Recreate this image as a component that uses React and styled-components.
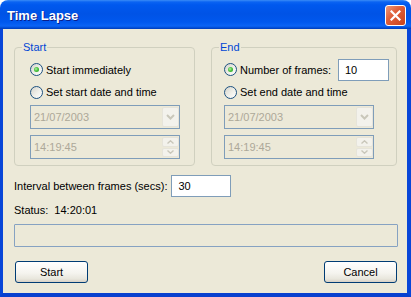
import React from "react";
import styled, { createGlobalStyle } from "styled-components";

const GlobalStyle = createGlobalStyle`
  html, body { margin: 0; padding: 0; background: #ffffff; }
  body { font-family: "Liberation Sans", Arial, sans-serif; font-size: 11px; color: #000; }
  * { box-sizing: border-box; }
`;

const Window = styled.div`
  width: 411px;
  height: 297px;
  display: flex;
  flex-direction: column;
`;

const TitleBar = styled.div`
  height: 29px;
  flex-shrink: 0;
  border-radius: 8px 8px 0 0;
  background: linear-gradient(
    to bottom,
    #3a8cf6 0px,
    #0a63f2 2px,
    #0058ee 5px,
    #0053e6 14px,
    #0058ee 22px,
    #0b64f5 26px,
    #0049d0 28px,
    #003cb8 29px
  );
  display: flex;
  align-items: center;
  justify-content: space-between;
  padding: 0 5px 0 7px;
`;

const Title = styled.span`
  color: #ffffff;
  font-family: "Liberation Sans", Arial, sans-serif;
  font-weight: bold;
  font-size: 13px;
  margin-top: 1px;
  text-shadow: 1px 1px 0 #0a1e8c;
`;

const CloseButton = styled.div`
  width: 21px;
  height: 21px;
  margin-top: 2px;
  border: 1px solid #ffffff;
  border-radius: 3px;
  background: linear-gradient(135deg, #eb9a7c 0%, #e0603b 40%, #c8421c 100%);
  display: flex;
  align-items: center;
  justify-content: center;
`;

const Body = styled.div`
  flex: 1;
  background: #ece9d8;
  border-left: 3px solid #0846d8;
  border-right: 4px solid #0846d8;
  border-bottom: 4px solid #0840cf;
  padding: 18px 9px 10px 11px;
  display: flex;
  flex-direction: column;
`;

const GroupsRow = styled.div`
  display: flex;
  gap: 16px;
  height: 119px;
`;

const GroupBox = styled.div`
  position: relative;
  width: ${(p) => p.$width}px;
  border: 1px solid #d0d0bf;
  border-radius: 4px;
  padding: 10px ${(p) => p.$right}px 6px ${(p) => p.$left}px;
  display: flex;
  flex-direction: column;
`;

const GroupLabel = styled.span`
  position: absolute;
  top: -8px;
  left: 7px;
  padding: 0 1px;
  line-height: 14px;
  background: #ece9d8;
  color: #0046d5;
`;

const RadioRow = styled.div`
  display: flex;
  align-items: center;
  gap: 3px;
  height: ${(p) => p.$h}px;
  flex-shrink: 0;
`;

const RadioCircle = styled.span`
  position: relative;
  width: 13px;
  height: 13px;
  flex-shrink: 0;
  border-radius: 50%;
  border: 1px solid #1c5180;
  background: linear-gradient(135deg, #d4d3cb 0%, #f0f0ea 55%, #ffffff 100%);
  &::after {
    content: "";
    display: ${(p) => (p.$checked ? "block" : "none")};
    position: absolute;
    left: 3px;
    top: 3px;
    width: 5px;
    height: 5px;
    border-radius: 50%;
    background: radial-gradient(circle at 40% 40%, #b6f0a8 0%, #4bc43f 45%, #1d9a1d 100%);
  }
`;

const TextField = styled.div`
  width: ${(p) => p.$width}px;
  height: 22px;
  flex-shrink: 0;
  margin-left: ${(p) => (p.$push ? "auto" : "0")};
  border: 1px solid #7f9db9;
  background: #ffffff;
  padding-left: 6px;
  display: flex;
  align-items: center;
`;

const Combo = styled.div`
  width: 150px;
  height: 24px;
  flex-shrink: 0;
  margin-top: ${(p) => p.$mt}px;
  border: 1px solid #7f9db9;
  background: #ece9d8;
  display: flex;
`;

const ComboText = styled.span`
  flex: 1;
  display: flex;
  align-items: center;
  padding-left: 3px;
  color: #aca899;
`;

const DropButton = styled.div`
  width: 17px;
  margin: 1px 0 1px 0;
  border-radius: 2px;
  background: #f3f2ec;
  border: 1px solid #e6e4da;
  display: flex;
  align-items: center;
  justify-content: center;
`;

const Spinner = styled.div`
  width: 17px;
  margin: 1px 0;
  display: flex;
  flex-direction: column;
  gap: 1px;
`;

const SpinHalf = styled.div`
  flex: 1;
  border-radius: 2px;
  background: #f3f2ec;
  border: 1px solid #e6e4da;
  display: flex;
  align-items: center;
  justify-content: center;
`;

const IntervalRow = styled.div`
  margin-top: 9px;
  height: 22px;
  display: flex;
  align-items: center;
  gap: 4px;
`;

const Status = styled.div`
  margin-top: 7px;
  line-height: 13px;
  height: 13px;
  white-space: pre;
`;

const Progress = styled.div`
  margin-top: 7px;
  height: 23px;
  border: 1px solid #86a2c2;
  border-radius: 1px;
  background: #ece9d8;
`;

const ButtonRow = styled.div`
  margin-top: 14px;
  display: flex;
  justify-content: space-between;
  padding: 0 1px;
`;

const Button = styled.div`
  width: 73px;
  height: 22px;
  border: 1px solid #003c74;
  border-radius: 3px;
  background: linear-gradient(to bottom, #ffffff 0%, #f5f4ef 55%, #e8e6dc 85%, #d6d0c5 100%);
  display: flex;
  align-items: center;
  justify-content: center;
`;

const ChevronDown = () => (
  <svg width="9" height="6" viewBox="0 0 9 6">
    <path d="M1 1 L4.5 4.5 L8 1" fill="none" stroke="#c9c7ba" strokeWidth="2" />
  </svg>
);

const SmallUp = () => (
  <svg width="7" height="4" viewBox="0 0 7 4">
    <path d="M0.5 3.5 L3.5 0.8 L6.5 3.5" fill="none" stroke="#c9c7ba" strokeWidth="1.4" />
  </svg>
);

const SmallDown = () => (
  <svg width="7" height="4" viewBox="0 0 7 4">
    <path d="M0.5 0.5 L3.5 3.2 L6.5 0.5" fill="none" stroke="#c9c7ba" strokeWidth="1.4" />
  </svg>
);

const DateCombo = ({ value, mt }) => (
  <Combo $mt={mt}>
    <ComboText>{value}</ComboText>
    <DropButton>
      <ChevronDown />
    </DropButton>
  </Combo>
);

const TimeCombo = ({ value, mt }) => (
  <Combo $mt={mt}>
    <ComboText>{value}</ComboText>
    <Spinner>
      <SpinHalf>
        <SmallUp />
      </SpinHalf>
      <SpinHalf>
        <SmallDown />
      </SpinHalf>
    </Spinner>
  </Combo>
);

export default function App() {
  return (
    <>
      <GlobalStyle />
      <Window>
        <TitleBar>
          <Title>Time Lapse</Title>
          <CloseButton>
            <svg width="11" height="11" viewBox="0 0 11 11">
              <path d="M1.5 1.5 L9.5 9.5 M9.5 1.5 L1.5 9.5" stroke="#ffffff" strokeWidth="2.2" strokeLinecap="square" />
            </svg>
          </CloseButton>
        </TitleBar>
        <Body>
          <GroupsRow>
            <GroupBox $width={181} $left={15} $right={14}>
              <GroupLabel>Start</GroupLabel>
              <RadioRow $h={23}>
                <RadioCircle $checked />
                <span>Start immediately</span>
              </RadioRow>
              <RadioRow $h={22}>
                <RadioCircle />
                <span>Set start date and time</span>
              </RadioRow>
              <DateCombo value="21/07/2003" mt={2} />
              <TimeCombo value="14:19:45" mt={6} />
            </GroupBox>
            <GroupBox $width={186} $left={12} $right={7}>
              <GroupLabel>End</GroupLabel>
              <RadioRow $h={23}>
                <RadioCircle $checked />
                <span>Number of frames:</span>
                <TextField $width={51} $push>10</TextField>
              </RadioRow>
              <RadioRow $h={22}>
                <RadioCircle />
                <span>Set end date and time</span>
              </RadioRow>
              <DateCombo value="21/07/2003" mt={2} />
              <TimeCombo value="14:19:45" mt={6} />
            </GroupBox>
          </GroupsRow>
          <IntervalRow>
            <span>Interval between frames (secs):</span>
            <TextField $width={60}>30</TextField>
          </IntervalRow>
          <Status>Status:  14:20:01</Status>
          <Progress />
          <ButtonRow>
            <Button>Start</Button>
            <Button>Cancel</Button>
          </ButtonRow>
        </Body>
      </Window>
    </>
  );
}
